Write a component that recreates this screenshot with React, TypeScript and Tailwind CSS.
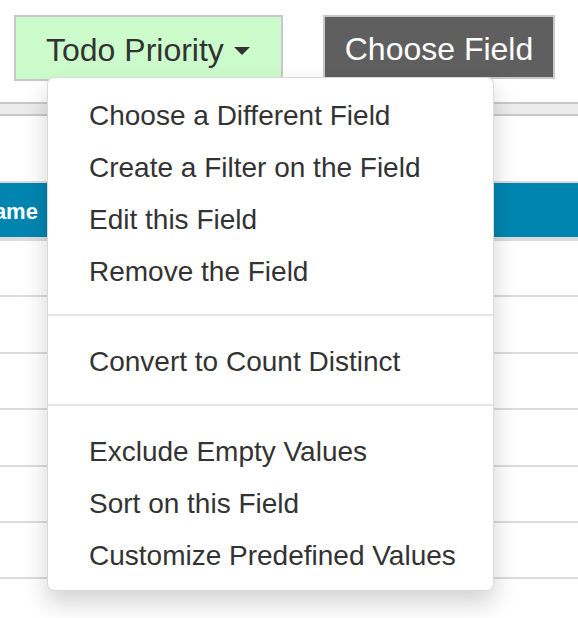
import React from "react";

const groups: string[][] = [
  [
    "Choose a Different Field",
    "Create a Filter on the Field",
    "Edit this Field",
    "Remove the Field",
  ],
  ["Convert to Count Distinct"],
  ["Exclude Empty Values", "Sort on this Field", "Customize Predefined Values"],
];

const FieldMenu: React.FC = () => {
  return (
    <div className="absolute left-[47px] top-[77px] z-10 w-[447px] rounded-[7px] border border-black/15 bg-white py-[10px] shadow-[0_12px_24px_rgba(0,0,0,0.175)]">
      {groups.map((items, g) => (
        <div key={g}>
          {g > 0 && <div className="my-[18px] h-[2px] bg-[#e5e5e5]"></div>}
          {items.map((label) => (
            <div
              key={label}
              className="flex h-[52px] items-center whitespace-nowrap px-[41px] pt-[3px] text-[28px] text-[#333]"
            >
              {label}
            </div>
          ))}
        </div>
      ))}
    </div>
  );
};

export default function App() {
  return (
    <div className="relative h-[618px] w-[578px] overflow-hidden bg-white font-['Liberation_Sans',Arial,sans-serif]">
      <div className="flex gap-[40px] pl-[14px] pt-[15px]">
        <button className="flex h-[66px] w-[269px] items-center gap-[10px] border-2 border-[#c8c8c8] bg-[#cdfccc] pl-[30px] pt-[3px] text-[32px] text-[#333]">
          <span>Todo Priority</span>
          <span className="mt-[2px] inline-block h-0 w-0 border-x-[8px] border-t-[8px] border-x-transparent border-t-[#333]"></span>
        </button>
        <button className="flex h-[64px] w-[232px] items-center justify-center border-2 border-[#c8c8c8] bg-[#5f5f5f] pt-[3px] text-[32px] text-white">
          Choose Field
        </button>
      </div>

      <div className="mt-[21px] h-[14px] border-y-2 border-[#c9c9c9] bg-[#ececec]"></div>

      <div className="mt-[65px] border-t-2 border-b-4 border-[#dcdcdc]">
        <div className="flex h-[54px] items-center bg-[#0085b0] pt-[2px]">
          <span className="ml-[-22px] text-[22px] font-bold text-white">Name</span>
        </div>
      </div>
      <div>
        {[0, 1, 2, 3, 4, 5].map((i) => (
          <div key={i} className="h-[56.4px] border-b-2 border-[#dcdcdc]"></div>
        ))}
      </div>

      <FieldMenu />
    </div>
  );
}
